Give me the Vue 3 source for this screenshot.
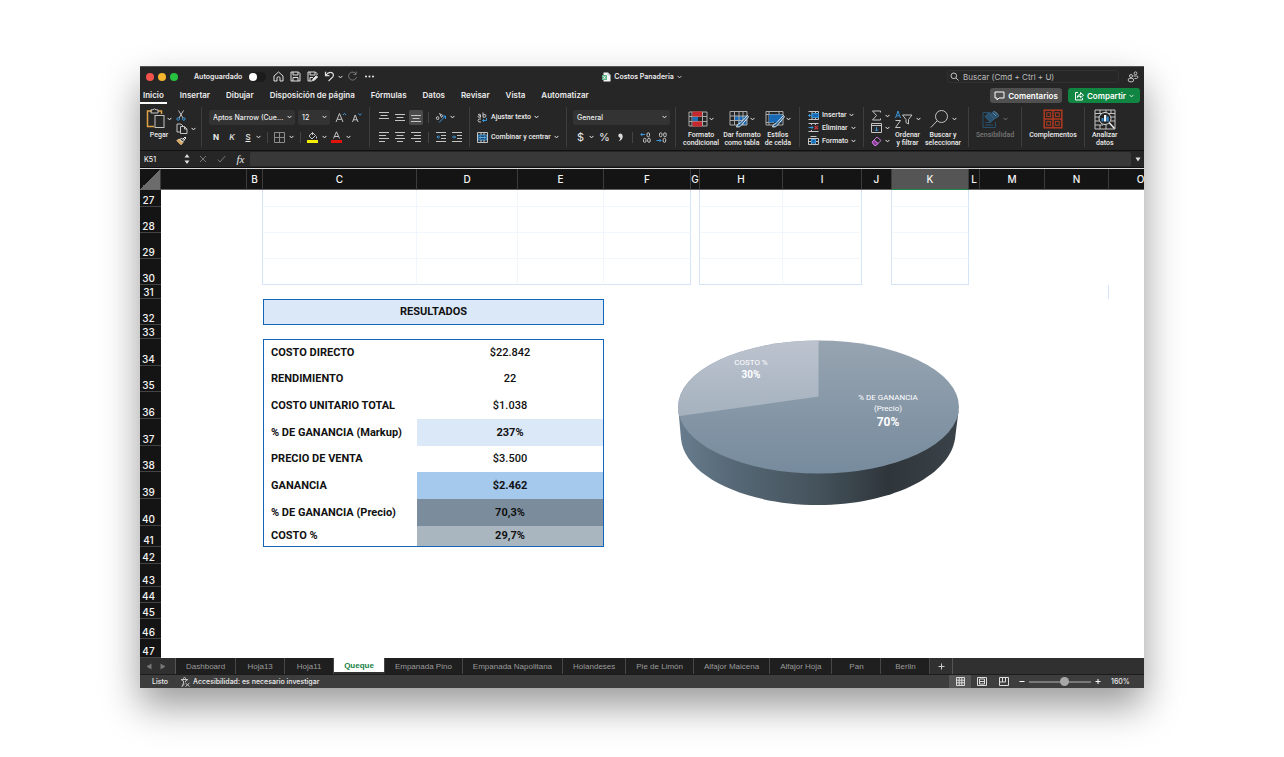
<script setup>
import { ref } from 'vue'

const autosave = ref(false)
const zoom = ref(160)
const formula = ref('')
const activeMenu = ref('Inicio')
const activeSheet = ref('Queque')

const menus = ['Inicio', 'Insertar', 'Dibujar', 'Disposición de página', 'Fórmulas', 'Datos', 'Revisar', 'Vista', 'Automatizar']
const sheets = ['Dashboard', 'Hoja13', 'Hoja11', 'Queque', 'Empanada Pino', 'Empanada Napolitana', 'Holandeses', 'Pie de Limón', 'Alfajor Maicena', 'Alfajor Hoja', 'Pan', 'Berlin']
const columns = ['A', 'B', 'C', 'D', 'E', 'F', 'G', 'H', 'I', 'J', 'K', 'L', 'M', 'N', 'O']

const gridRows = [
  { n: 27, h: 'h17' },
  { n: 28, h: 'h26' },
  { n: 29, h: 'h26' },
  { n: 30, h: 'h26', last: true }
]
const results = [
  { n: 34, h: 'h27', label: 'COSTO DIRECTO', value: '$22.842' },
  { n: 35, h: 'h26', label: 'RENDIMIENTO', value: '22' },
  { n: 36, h: 'h27', label: 'COSTO UNITARIO TOTAL', value: '$1.038' },
  { n: 37, h: 'h27', label: '% DE GANANCIA (Markup)', value: '237%', tone: 'pale' },
  { n: 38, h: 'h26', label: 'PRECIO DE VENTA', value: '$3.500' },
  { n: 39, h: 'h27', label: 'GANANCIA', value: '$2.462', tone: 'sky' },
  { n: 40, h: 'h27', label: '% DE GANANCIA (Precio)', value: '70,3%', tone: 'slate' },
  { n: 41, h: 'h21', label: 'COSTO %', value: '29,7%', tone: 'mist' }
]
const tailRows = [
  { n: 42, h: 'h17' },
  { n: 43, h: 'h23' },
  { n: 44, h: 'h16' },
  { n: 45, h: 'h16' },
  { n: 46, h: 'h20' },
  { n: 47, h: 'h19' }
]
</script>

<template>
  <main class="page">
    <section class="window">
      <header class="titlebar">
        <div class="tb-left">
          <div class="lights">
            <button class="light red" aria-label="Cerrar"></button>
            <button class="light yellow" aria-label="Minimizar"></button>
            <button class="light green" aria-label="Ampliar"></button>
          </div>
          <label class="auto"><span>Autoguardado</span><input v-model="autosave" type="checkbox" class="switch" /></label>
          <div class="quick">
            <button aria-label="Inicio"><svg width="11" height="11" viewBox="0 0 11 11"><path d="M1 5 5.500 1 10 5V10H7V6.800Q7 5.800 5.500 5.800T4 6.800V10H1Z" /></svg></button>
            <button aria-label="Guardar"><svg width="11" height="11" viewBox="0 0 11 11"><path d="M1 1H8.500L10 2.500V10H1ZM3 1V4H8V1M3 10V6.500H8V10" /></svg></button>
            <button aria-label="Guardar como"><svg width="11" height="11" viewBox="0 0 11 11"><path d="M5 10H1V1H8.500L10 2.500V4M3 1V4H8V1M3 10V6.500H6" /><path d="M5.500 9.800 6 8 9.300 4.700 10.600 6 7.300 9.300Z" fill="#eee" /></svg></button>
            <button aria-label="Deshacer"><svg width="11" height="11" viewBox="0 0 11 11"><path d="M1.500 .8V4.600H5.400M1.600 4.500Q4.500 .8 7.500 1.600 10.300 2.900 9 5.600L4.500 10.200" stroke-width="1.200" /></svg></button>
            <button class="mini" aria-label="Opciones de deshacer"><svg class="chev" width="5" height="4" viewBox="0 0 5 4"><path d="M.6 .9 2.500 2.900 4.400 .9" /></svg></button>
            <button class="dim" aria-label="Rehacer"><svg width="11" height="11" viewBox="0 0 11 11"><path d="M9 3A4 4 0 1 0 9.500 6M9.200 .6V3.400H6.400" /></svg></button>
            <button aria-label="Más"><svg width="11" height="11" viewBox="0 0 11 11"><g fill="#eee" stroke="none"><circle cx="2" cy="5.500" r="1" /><circle cx="5.500" cy="5.500" r="1" /><circle cx="9" cy="5.500" r="1" /></g></svg></button>
          </div>
        </div>
        <div class="doc">
          <svg width="9" height="10" viewBox="0 0 9 10"><path d="M1.500 .5H6L8.500 3V9.500H1.500Z" fill="#f4f6f4" stroke="none" /><path d="M6 .5V3H8.500" stroke="#9ab" stroke-width=".6" /><rect x="0" y="3" width="5" height="5" fill="#5fb287" stroke="none" /><path d="M1.500 4.200 3.500 6.800M3.500 4.200 1.500 6.800" stroke="#fff" stroke-width=".8" /></svg>
          <h1>Costos Panaderia</h1>
          <svg class="chev" width="5" height="4" viewBox="0 0 5 4"><path d="M.6 .9 2.500 2.900 4.400 .9" stroke-width=".8" /></svg>
        </div>
        <div class="tb-right">
          <label class="search">
            <svg width="9" height="9" viewBox="0 0 9 9"><circle cx="3.800" cy="3.800" r="2.800" /><path d="M6 6 8.500 8.500" /></svg>
            <input type="text" placeholder="Buscar (Cmd + Ctrl + U)" aria-label="Buscar" />
          </label>
          <button aria-label="Colaboradores"><svg width="12" height="12" viewBox="0 0 12 12"><circle cx="4" cy="5" r="1.500" /><rect x="1.200" y="7.300" width="5.400" height="3.500" rx="1.700" /><circle cx="8.500" cy="2.300" r="1.400" /><path d="M6.500 5H9.500Q11 5 11 6T9.500 7.500H7.500" /></svg></button>
        </div>
      </header>

      <nav class="menubar">
        <button v-for="m in menus" :key="m" :class="{ on: m === activeMenu }" @click="activeMenu = m">{{ m }}</button>
        <div class="share">
          <button class="pill"><svg width="11" height="10" viewBox="0 0 11 10"><path d="M1 1H10V7H5L3 9V7H1Z" /></svg>Comentarios</button>
          <button class="pill go"><svg width="10" height="10" viewBox="0 0 10 10"><path d="M4 1.500H1.500V9H8.500V7M3 6.500Q3.500 3.500 6.500 3.500V1.500L9.500 4.300 6.500 6.700V5Q4.500 5 3 6.500Z" /></svg>Compartir<svg class="chev" width="5" height="4" viewBox="0 0 5 4"><path d="M.6 .9 2.500 2.900 4.400 .9" stroke-width=".8" /></svg></button>
        </div>
      </nav>

      <div class="ribbon">
        <div class="group paste">
          <button class="big">
            <span class="icon"><svg width="20" height="22" viewBox="0 0 20 22"><path d="M6 3H1.500V18.500H8M12 3H15.500V6" stroke="#e0a244" stroke-width="1.500" /><path d="M5 1.800H7Q8.500 -.2 10 1.800H12V5H5Z" /><rect x="9" y="7.500" width="9" height="12" /></svg><svg class="chev" width="5" height="4" viewBox="0 0 5 4"><path d="M.6 .9 2.500 2.900 4.400 .9" /></svg></span>
            <span>Pegar</span>
          </button>
          <div class="stack">
            <button aria-label="Cortar"><svg width="10" height="11" viewBox="0 0 10 11"><path d="M2.500 .5 7 8M7.500 .5 3 8" /><circle cx="2.200" cy="9" r="1.300" stroke="#3c96d8" /><circle cx="7.800" cy="9" r="1.300" stroke="#3c96d8" /></svg></button>
            <button aria-label="Copiar"><svg width="12" height="11" viewBox="0 0 12 11"><path d="M4.500 9H1V1H5L7 3M4.500 3.500H8.500L11 6V10.500H4.500ZM8.500 3.500V6H11" /></svg><svg class="chev" width="5" height="4" viewBox="0 0 5 4"><path d="M.6 .9 2.500 2.900 4.400 .9" /></svg></button>
            <button aria-label="Copiar formato"><svg width="11" height="10" viewBox="0 0 11 10"><path d="M.8 4.500 5 8.800 7 6.500 3.500 3Z" fill="#d9a860" stroke="#e8c088" /><path d="M4 3.500 5.500 2 8 4.500 6.500 6ZM6.800 3.200 9 1 10 2 7.800 4.200" stroke="#eee" /></svg></button>
          </div>
        </div>

        <div class="group rows font">
          <div class="row">
            <span class="pick w86"><select aria-label="Fuente"><option>Aptos Narrow (Cue...</option></select><svg class="chev" width="5" height="4" viewBox="0 0 5 4"><path d="M.6 .9 2.500 2.900 4.400 .9" /></svg></span>
            <span class="pick w32"><select aria-label="Tamaño"><option>12</option></select><svg class="chev" width="5" height="4" viewBox="0 0 5 4"><path d="M.6 .9 2.500 2.900 4.400 .9" /></svg></span>
            <button class="grow" aria-label="Aumentar fuente"><svg width="12" height="11" viewBox="0 0 12 11"><path d="M1 10 4.500 1.500 8 10M2.300 7.300H6.700" /><path d="M8 3 9.500 1.300 11 3" stroke="#3c96d8" /></svg></button>
            <button class="grow" aria-label="Disminuir fuente"><svg width="11" height="11" viewBox="0 0 11 11"><path d="M1.500 10 4.200 3 7 10M2.500 7.800H6" /><path d="M7.500 1.500 9 3.200 10.500 1.500" stroke="#3c96d8" /></svg></button>
          </div>
          <div class="row marks">
            <button class="b">N</button><button class="i">K</button><button class="u">S</button>
            <svg class="chev" width="5" height="4" viewBox="0 0 5 4"><path d="M.6 .9 2.500 2.900 4.400 .9" /></svg>
            <i class="bar"></i>
            <button aria-label="Bordes"><svg width="11" height="11" viewBox="0 0 11 11"><path d="M.5 .5H10.500V10.500H.5ZM5.500 .5V10.500M.5 5.500H10.500" stroke="#8c8c8c" /></svg></button>
            <svg class="chev" width="5" height="4" viewBox="0 0 5 4"><path d="M.6 .9 2.500 2.900 4.400 .9" /></svg>
            <i class="bar"></i>
            <button aria-label="Color de relleno"><svg width="11" height="12" viewBox="0 0 11 12"><path d="M2 5 5.500 1.500 8.500 4.500 5 8ZM5.500 1.500V4M9.500 5.500V7.500" /><rect y="9" width="11" height="3" fill="#f6ee00" stroke="none" /></svg></button>
            <svg class="chev" width="5" height="4" viewBox="0 0 5 4"><path d="M.6 .9 2.500 2.900 4.400 .9" /></svg>
            <button aria-label="Color de fuente"><svg width="11" height="12" viewBox="0 0 11 12"><path d="M2.500 7.500 5.500 .8 8.500 7.500M3.500 5.500H7.500" /><rect y="9" width="11" height="3" fill="#e3120b" stroke="none" /></svg></button>
            <svg class="chev" width="5" height="4" viewBox="0 0 5 4"><path d="M.6 .9 2.500 2.900 4.400 .9" /></svg>
          </div>
        </div>

        <div class="group rows align">
          <div class="row">
            <button aria-label="Alinear arriba"><svg width="10" height="10" viewBox="0 0 10 10"><path d="M0 .5H10M1.500 3.500H8.500M0 6.500H10" /></svg></button>
            <button aria-label="Alinear al medio"><svg width="10" height="10" viewBox="0 0 10 10"><path d="M0 2.500H10M1.500 5.500H8.500M0 8.500H10" /></svg></button>
            <button class="active" aria-label="Alinear abajo"><svg width="10" height="10" viewBox="0 0 10 10"><path d="M0 3.500H10M1.500 6.500H8.500M0 9.500H10" /></svg></button>
            <i class="bar"></i>
            <button aria-label="Orientación"><svg width="12" height="11" viewBox="0 0 12 11"><path d="M1 6Q2.500 3 4 5.500 4 8 2.200 7.500T2 5.500M4.500 1 6.500 5.500Q8.500 3.500 6.800 2.500T5.500 4" /><path d="M4 10.500 10.500 4M7.500 4H10.500V7" stroke="#3c96d8" /></svg></button>
            <svg class="chev" width="5" height="4" viewBox="0 0 5 4"><path d="M.6 .9 2.500 2.900 4.400 .9" /></svg>
          </div>
          <div class="row">
            <button aria-label="Izquierda"><svg width="10" height="10" viewBox="0 0 10 10"><path d="M0 .5H10M0 3.500H7M0 6.500H10M0 9.500H6" /></svg></button>
            <button aria-label="Centrar"><svg width="10" height="10" viewBox="0 0 10 10"><path d="M0 .5H10M1.500 3.500H8.500M0 6.500H10M2 9.500H8" /></svg></button>
            <button aria-label="Derecha"><svg width="10" height="10" viewBox="0 0 10 10"><path d="M0 .5H10M3 3.500H10M0 6.500H10M4 9.500H10" /></svg></button>
            <i class="bar"></i>
            <button aria-label="Disminuir sangría"><svg width="10" height="10" viewBox="0 0 10 10"><path d="M0 .5H10M5 3.500H10M5 6.500H10M0 9.500H10" /><path d="M4 5H1M2.500 3.500 1 5 2.500 6.500" stroke="#3c96d8" /></svg></button>
            <button aria-label="Aumentar sangría"><svg width="10" height="10" viewBox="0 0 10 10"><path d="M0 .5H10M5 3.500H10M5 6.500H10M0 9.500H10" /><path d="M0 5H3.500M2 3.500 3.500 5 2 6.500" stroke="#3c96d8" /></svg></button>
          </div>
        </div>

        <div class="group rows wrap">
          <div class="row"><button class="txt"><svg width="11" height="11" viewBox="0 0 11 11"><path d="M1 2.500Q3.500 1.500 3.500 3V5.500M3.500 3.500Q1 3.500 1 4.700T3.500 5M6 .5V5.300M6 3Q9 1.500 9 3.800T6 5M4 7Q1 6.500 1 8.500T4 10" /><path d="M9.500 6V8.500H5.500M7 7 5.500 8.500 7 10" stroke="#3c96d8" /></svg>Ajustar texto<svg class="chev" width="5" height="4" viewBox="0 0 5 4"><path d="M.6 .9 2.500 2.900 4.400 .9" /></svg></button></div>
          <div class="row"><button class="txt"><svg width="11" height="11" viewBox="0 0 11 11"><rect x="1" y="3" width="9" height="5" fill="#1d4f78" stroke="#3c96d8" /><path d="M.5 .5H10.500V10.500H.5ZM4 .5V3M7 .5V3M4 8V10.500M7 8V10.500" /><path d="M2.500 5.500H8.500M3.500 4.500 2.500 5.500 3.500 6.500M7.500 4.500 8.500 5.500 7.500 6.500" stroke="#7ac0f5" stroke-width=".8" /></svg>Combinar y centrar<svg class="chev" width="5" height="4" viewBox="0 0 5 4"><path d="M.6 .9 2.500 2.900 4.400 .9" /></svg></button></div>
        </div>

        <div class="group rows number">
          <div class="row"><span class="pick fill"><select aria-label="Formato de número"><option>General</option></select><svg class="chev" width="5" height="4" viewBox="0 0 5 4"><path d="M.6 .9 2.500 2.900 4.400 .9" /></svg></span></div>
          <div class="row symbols">
            <button class="sym">$</button>
            <svg class="chev" width="5" height="4" viewBox="0 0 5 4"><path d="M.6 .9 2.500 2.900 4.400 .9" /></svg>
            <button class="sym">%</button>
            <button aria-label="Estilo millares"><svg width="10" height="11" viewBox="0 0 10 11"><path d="M5.500 1.500A2.100 2.100 0 1 0 5.300 5.700Q5.600 7.500 3.600 9.300 8 8 7.700 4 7.500 1.600 5.500 1.500Z" fill="#ddd" stroke="none" /></svg></button>
            <i class="bar"></i>
            <button aria-label="Aumentar decimales"><svg width="11" height="11" viewBox="0 0 11 11"><path d="M5 2.500H.8M2.300 1 .8 2.500 2.300 4" stroke="#3c96d8" /><rect x="7" y=".8" width="2.500" height="4" rx="1.200" /><rect x="3.500" y="6.300" width="2.500" height="4" rx="1.200" /><rect x="7.700" y="6.300" width="2.500" height="4" rx="1.200" /></svg></button>
            <button aria-label="Disminuir decimales"><svg width="11" height="11" viewBox="0 0 11 11"><path d="M.5 8.500H5M3.500 7 5 8.500 3.500 10" stroke="#3c96d8" /><rect x="3.500" y=".8" width="2.500" height="4" rx="1.200" /><rect x="7.700" y=".8" width="2.500" height="4" rx="1.200" /><rect x="7.200" y="6.300" width="2.500" height="4" rx="1.200" /></svg></button>
          </div>
        </div>

        <div class="group trio">
          <button class="big">
            <span class="icon"><svg width="20" height="18" viewBox="0 0 20 18"><path d="M1 2H19V16H1ZM1 6.500H19M1 11.500H19M4 2V16M14.500 2V16" stroke="#aaa" /><path d="M4.500 1.500H14V6.500H4.500ZM4.500 11.500H14V16.500H4.500Z" fill="#c5282f" stroke="none" /><path d="M4.500 7H10V11H4.500Z" fill="#1e6fb8" stroke="none" /></svg><svg class="chev" width="5" height="4" viewBox="0 0 5 4"><path d="M.6 .9 2.500 2.900 4.400 .9" /></svg></span>
            <span>Formato<br />condicional</span>
          </button>
          <button class="big">
            <span class="icon"><svg width="20" height="18" viewBox="0 0 20 18"><path d="M5 6H18V15H9V11H5Z" fill="#1769b5" stroke="none" /><path d="M1 1.500H18V15H1ZM1 6H18M1 10.500H18M5.500 1.500V15M10 1.500V15M14 1.500V15" stroke="#aaa" /><path d="M18.500 5.500 11 13.500Q8 13.500 7.500 17 11.500 17.500 12.500 15L19.500 6.800Z" fill="#2a5f8e" stroke="#d8e4ee" /></svg><svg class="chev" width="5" height="4" viewBox="0 0 5 4"><path d="M.6 .9 2.500 2.900 4.400 .9" /></svg></span>
            <span>Dar formato<br />como tabla</span>
          </button>
          <button class="big">
            <span class="icon"><svg width="20" height="18" viewBox="0 0 20 18"><path d="M1 1.500H18V15H1ZM1 4.500H18M4 1.500V15M1 12.500H9M14 1.500V4" stroke="#aaa" /><rect x="4" y="4.500" width="13" height="8" fill="#1769b5" stroke="none" /><path d="M18.500 5.500 11 13.500Q8 13.500 7.500 17 11.500 17.500 12.500 15L19.500 6.800Z" fill="#2a5f8e" stroke="#d8e4ee" /></svg><svg class="chev" width="5" height="4" viewBox="0 0 5 4"><path d="M.6 .9 2.500 2.900 4.400 .9" /></svg></span>
            <span>Estilos<br />de celda</span>
          </button>
        </div>

        <div class="group cells">
          <button class="txt"><svg width="11" height="9" viewBox="0 0 11 9"><path d="M.5 .5H10.500V8.500H.5M4 .5V8.500M7.500 .5V8.500" /><path d="M4 2.500H10.500V6.500H4Z" fill="#1769b5" stroke="#3c96d8" /><path d="M3.500 4.500H.5M2 3 .5 4.500 2 6" stroke="#3c96d8" /></svg>Insertar<svg class="chev" width="5" height="4" viewBox="0 0 5 4"><path d="M.6 .9 2.500 2.900 4.400 .9" /></svg></button>
          <button class="txt"><svg width="11" height="9" viewBox="0 0 11 9"><path d="M.5 .5H10.500M.5 8.500H10.500M3.500 .5V2M7.500 .5V2M3.500 7V8.500" /><path d="M.5 4.500H5M3.500 3 5 4.500 3.500 6" stroke="#3c96d8" /><path d="M6.500 2.800 10 6.300M10 2.800 6.500 6.300" stroke="#d8383f" stroke-width="1.200" /></svg>Eliminar<svg class="chev" width="5" height="4" viewBox="0 0 5 4"><path d="M.6 .9 2.500 2.900 4.400 .9" /></svg></button>
          <button class="txt"><svg width="11" height="9" viewBox="0 0 11 9"><path d="M2.500 .5H8.500M.5 2.500H10.500V8.500H.5ZM.5 5.500H10.500M3.500 2.500V8.500M7.500 2.500V8.500" /><rect x="3.500" y="3.500" width="4" height="3.500" fill="#1769b5" stroke="#3c96d8" /></svg>Formato<svg class="chev" width="5" height="4" viewBox="0 0 5 4"><path d="M.6 .9 2.500 2.900 4.400 .9" /></svg></button>
        </div>

        <div class="group edit">
          <div class="stack">
            <button aria-label="Autosuma"><svg width="11" height="11" viewBox="0 0 11 11"><path d="M9.500 2.500V1H1.500L5.500 5.500 1.500 10H9.500V8.500" /></svg><svg class="chev" width="5" height="4" viewBox="0 0 5 4"><path d="M.6 .9 2.500 2.900 4.400 .9" /></svg></button>
            <button aria-label="Rellenar"><svg width="11" height="10" viewBox="0 0 11 10"><path d="M.5 .5H10.500V9.500H.5ZM.5 2.500H10.500" /><path d="M5.500 4V8M4 6.500 5.500 8 7 6.500" stroke="#3c96d8" /></svg><svg class="chev" width="5" height="4" viewBox="0 0 5 4"><path d="M.6 .9 2.500 2.900 4.400 .9" /></svg></button>
            <button aria-label="Borrar"><svg width="11" height="10" viewBox="0 0 11 10"><path d="M1 6 6 1 10 4.500 5 9.500H3.500ZM3 4 7 7.500" stroke="#c878d6" /><path d="M1 6 3 4 7 7.500 5 9.500H3.500Z" fill="#8d3c9c" stroke="#c878d6" /></svg><svg class="chev" width="5" height="4" viewBox="0 0 5 4"><path d="M.6 .9 2.500 2.900 4.400 .9" /></svg></button>
          </div>
          <button class="big">
            <span class="icon"><svg width="19" height="20" viewBox="0 0 19 20"><path d="M1.500 9 4 2 6.500 9M2.300 6.800H5.700" stroke="#3c96d8" /><path d="M1.500 11.500H6.500L1.500 18.500H6.500M8.500 6H18L14.500 10.500V15L12 13.500V10.500Z" /></svg><svg class="chev" width="5" height="4" viewBox="0 0 5 4"><path d="M.6 .9 2.500 2.900 4.400 .9" /></svg></span>
            <span>Ordenar<br />y filtrar</span>
          </button>
          <button class="big">
            <span class="icon"><svg width="19" height="20" viewBox="0 0 19 20"><circle cx="11.500" cy="7.500" r="6" /><path d="M7.200 11.800 .8 18.500" /></svg><svg class="chev" width="5" height="4" viewBox="0 0 5 4"><path d="M.6 .9 2.500 2.900 4.400 .9" /></svg></span>
            <span>Buscar y<br />seleccionar</span>
          </button>
        </div>

        <div class="group solo">
          <button class="big off" disabled>
            <span class="icon"><svg width="18" height="19" viewBox="0 0 18 19"><path d="M9 2.500H1V17.500H13.500V12M3.500 12.500H9M3.500 15H11" stroke="#27506f" /><path d="M3 6.500 7 3 12 9 8.500 12ZM8 5 12 1 17 6 12 9" fill="#27506f" stroke="#38627f" /><path d="M11 3 14 6M13 1.500 16 4.500" stroke="#7690a3" /></svg><svg class="chev" width="5" height="4" viewBox="0 0 5 4"><path d="M.6 .9 2.500 2.900 4.400 .9" /></svg></span>
            <span>Sensibilidad</span>
          </button>
        </div>
        <div class="group solo">
          <button class="big">
            <span class="icon"><svg width="20" height="20" viewBox="0 0 20 20"><g stroke="#b03a20" stroke-width="1.500"><rect x="1.200" y="1.200" width="17.600" height="17.600" /><path d="M10 1V19M1 10H19" /><rect x="3.800" y="3.800" width="3.800" height="3.800" stroke-width="1" /><rect x="12.400" y="3.800" width="3.800" height="3.800" stroke-width="1" /><rect x="3.800" y="12.400" width="3.800" height="3.800" stroke-width="1" /><rect x="12.400" y="12.400" width="3.800" height="3.800" stroke-width="1" /></g></svg></span>
            <span>Complementos</span>
          </button>
        </div>
        <div class="group solo end">
          <button class="big">
            <span class="icon"><svg width="22" height="21" viewBox="0 0 22 21"><path d="M1 1H21V20H1ZM1 4.500H21M1 8H5M1 12H5M1 16H9M17 8H21M17 12H21M6 1V4.500M12 1V4.500M17 1V4.500M6 16V20M12 16V20" /><circle cx="11" cy="9.500" r="6" fill="#222" stroke="#ddd" /><path d="M15.200 13.800 20.500 19.500" stroke="#eee" stroke-width="1.500" /><rect x="7.500" y="9" width="2" height="3.500" fill="#2f8fdc" stroke="none" /><rect x="10" y="6" width="2.300" height="6.500" fill="#f2f6fa" stroke="none" /><rect x="12.700" y="7.500" width="2" height="5" fill="#2f8fdc" stroke="none" /></svg></span>
            <span>Analizar<br />datos</span>
          </button>
        </div>
      </div>

      <div class="formulabar">
        <input class="namebox" type="text" value="K51" aria-label="Cuadro de nombres" />
        <svg class="step" width="6" height="12" viewBox="0 0 6 12"><path d="M3 1 5.500 4.500H.5ZM3 11 5.500 7.500H.5Z" fill="#ddd" stroke="none" /></svg>
        <button aria-label="Cancelar"><svg width="8" height="8" viewBox="0 0 8 8"><path d="M1 1 7 7M7 1 1 7" stroke="#777" /></svg></button>
        <button aria-label="Aceptar"><svg width="9" height="8" viewBox="0 0 9 8"><path d="M.8 4.500 3 7 8.200 1" stroke="#777" /></svg></button>
        <button class="fx">fx</button>
        <input v-model="formula" class="formula" type="text" aria-label="Barra de fórmulas" />
        <button class="expand" aria-label="Expandir"><svg width="6" height="5" viewBox="0 0 6 5"><path d="M.5 .5H5.500L3 4.500Z" fill="#ddd" stroke="none" /></svg></button>
      </div>

      <div class="sheet">
        <table>
          <colgroup>
            <col class="c-head" /><col v-for="c in columns" :key="c" :class="'c-' + c" />
          </colgroup>
          <thead>
            <tr>
              <th class="corner"></th>
              <th v-for="c in columns" :key="c" scope="col" :class="{ sel: c === 'K' }">{{ c === 'A' ? '' : c }}</th>
            </tr>
          </thead>
          <tbody>
            <tr v-for="r in gridRows" :key="r.n" :class="[r.h, { last: r.last }]">
              <th scope="row">{{ r.n }}</th>
              <td></td><td class="pre"></td>
              <td class="g"></td><td class="g"></td><td class="g"></td><td class="g edge"></td>
              <td class="pre"></td>
              <td class="g"></td><td class="g edge"></td>
              <td class="pre"></td>
              <td class="g edge"></td>
              <td></td><td></td><td></td><td></td>
            </tr>
            <tr class="h14"><th scope="row">31</th><td colspan="13"></td><td class="stub"></td><td></td></tr>
            <tr class="h26"><th scope="row">32</th><td colspan="2"></td><td colspan="3" class="heading">RESULTADOS</td><td colspan="10"></td></tr>
            <tr class="h14"><th scope="row">33</th><td colspan="15"></td></tr>
            <tr v-for="r in results" :key="r.n" class="res" :class="r.h">
              <th scope="row">{{ r.n }}</th>
              <td colspan="2"></td>
              <td class="name">{{ r.label }}</td>
              <td colspan="2" class="value" :class="r.tone">{{ r.value }}</td>
              <td colspan="10"></td>
            </tr>
            <tr v-for="r in tailRows" :key="r.n" :class="r.h"><th scope="row">{{ r.n }}</th><td colspan="15"></td></tr>
          </tbody>
        </table>

        <svg class="chart" width="284" height="168" viewBox="0 0 284 168" role="img" aria-label="Costo 30%, ganancia 70%">
          <defs>
            <linearGradient id="side" x1="0" x2="1" y1="0" y2="0">
              <stop offset="0" stop-color="#677c8e" /><stop offset=".2" stop-color="#566876" /><stop offset=".5" stop-color="#44525b" /><stop offset=".75" stop-color="#2f363b" /><stop offset="1" stop-color="#3a4349" />
            </linearGradient>
            <linearGradient id="top" x1="0" x2="0" y1="0" y2="1">
              <stop offset="0" stop-color="#97a4b1" /><stop offset="1" stop-color="#768b9d" />
            </linearGradient>
            <linearGradient id="light" x1="0" x2="0" y1="0" y2="1">
              <stop offset="0" stop-color="#bcc3cf" /><stop offset="1" stop-color="#a5b2be" />
            </linearGradient>
          </defs>
          <path d="M1.500 72 4 100C8 138 70 166 141 166S272 138 278 100L281.500 72Z" fill="url(#side)" />
          <ellipse cx="141.500" cy="68" rx="140.500" ry="66.500" fill="url(#top)" />
          <path d="M141.500 57.500V1.500A140.500 66.500 0 0 0 2.500 77Z" fill="url(#light)" />
          <text class="lbl" x="74" y="26">COSTO %</text>
          <text class="pct" x="74" y="39">30%</text>
          <text class="lbl" x="211" y="61">% DE GANANCIA</text>
          <text class="lbl" x="211" y="72">(Precio)</text>
          <text class="pct big-pct" x="211" y="87">70%</text>
        </svg>
      </div>

      <nav class="tabs">
        <div class="arrows">
          <button aria-label="Anterior"><svg width="6" height="7" viewBox="0 0 6 7"><path d="M5.500 .5V6.500L.5 3.500Z" fill="#777" stroke="none" /></svg></button>
          <button aria-label="Siguiente"><svg width="6" height="7" viewBox="0 0 6 7"><path d="M.5 .5V6.500L5.500 3.500Z" fill="#777" stroke="none" /></svg></button>
        </div>
        <button v-for="s in sheets" :key="s" class="tab" :class="{ on: s === activeSheet }" @click="activeSheet = s">{{ s }}</button>
        <button class="plus" aria-label="Hoja nueva"><svg width="7" height="7" viewBox="0 0 7 7"><path d="M3.500 .5V6.500M.5 3.500H6.500" stroke="#ccc" /></svg></button>
      </nav>

      <footer class="status">
        <span>Listo</span>
        <button class="acc"><svg width="10" height="10" viewBox="0 0 10 10"><circle cx="4.500" cy="1.500" r="1" /><path d="M1 2.500 3.500 4V6L2 9.500 4.500 6.800M8 2.500 5.500 4V5M1 2.500H8M5.500 6 9.500 9.500M9.500 6 5.500 9.500" /></svg>Accesibilidad: es necesario investigar</button>
        <div class="views">
          <button class="on" aria-label="Normal"><svg width="9" height="9" viewBox="0 0 9 9"><path d="M.5 .5H8.500V8.500H.5ZM3.200 .5V8.500M5.800 .5V8.500M.5 3.200H8.500M.5 5.800H8.500" stroke="#ddd" /></svg></button>
          <button aria-label="Diseño de página"><svg width="10" height="9" viewBox="0 0 10 9"><path d="M.5 .5H9.500V8.500H.5ZM2.500 2H7.500V7H2.500ZM2.500 4.500H7.500" stroke="#ddd" /></svg></button>
          <button aria-label="Saltos de página"><svg width="10" height="9" viewBox="0 0 10 9"><path d="M.5 .5H9.500V8.500H.5ZM3.500 .5V5H6.500V.5M.5 5H3.500" stroke="#ddd" /></svg></button>
        </div>
        <button class="zoombtn" aria-label="Alejar"><svg width="6" height="7" viewBox="0 0 6 7"><path d="M.5 3.500H5.500" stroke="#fff" /></svg></button>
        <input v-model="zoom" class="zoom" type="range" min="10" max="270" aria-label="Zoom" />
        <button class="zoombtn" aria-label="Acercar"><svg width="6" height="7" viewBox="0 0 6 7"><path d="M.5 3.500H5.500M3 1V6" stroke="#fff" /></svg></button>
        <output>{{ zoom }}%</output>
      </footer>
    </section>
  </main>
</template>

<style>
body {
  background: #fff;
}
</style>

<style scoped>
* {
  box-sizing: border-box;
}
.page {
  padding: 66px 140px 70px;
  font-family: Inter, "Liberation Sans", sans-serif;
}
.window {
  background: #262626;
  color: #ececec;
  font-size: 7px;
  font-weight: 500;
  box-shadow: 0 18px 36px rgba(0, 0, 0, 0.4);
  overflow: hidden;
}
button,
input,
select {
  margin: 0;
  padding: 0;
  border: 0;
  background: none;
  color: inherit;
  font: inherit;
  outline: none;
}
button {
  display: inline-flex;
  align-items: center;
  justify-content: center;
  white-space: nowrap;
  flex: none;
}
svg {
  flex: none;
  display: block;
  fill: none;
  stroke: #c4c4c4;
  stroke-width: 1;
}
.chev {
  stroke: #e8e8e8;
  stroke-width: 1;
}

.titlebar {
  display: grid;
  grid-template-columns: 1fr auto 1fr;
  align-items: center;
  height: 20px;
  border-top: 1px solid #555;
}
.tb-left,
.lights,
.auto,
.quick,
.doc,
.tb-right {
  display: flex;
  align-items: center;
}
.lights {
  gap: 4px;
  padding-left: 6px;
  width: 54px;
}
.light {
  width: 8px;
  height: 8px;
  border-radius: 50%;
}
.red { background: #f4524d; }
.yellow { background: #f6b52e; }
.green { background: #27c33f; }
.auto {
  gap: 7px;
  font-weight: 600;
}
.switch {
  appearance: none;
  width: 17px;
  height: 10px;
  border-radius: 5px;
  background: #1b1b1b;
  display: flex;
  align-items: center;
}
.switch::before {
  content: "";
  width: 8px;
  height: 8px;
  border-radius: 50%;
  background: #fff;
}
.quick {
  padding-left: 7px;
  gap: 6px;
}
.quick svg {
  stroke: #e0e0e0;
}
.quick .mini {
  margin: 0 -2px 0 -3px;
}
.quick .dim svg {
  stroke: #777;
}
.doc {
  gap: 3px;
}
.doc h1 {
  margin: 0;
  font-size: 7px;
  font-weight: 600;
}
.tb-right {
  justify-content: flex-end;
  gap: 8px;
  padding-right: 5px;
}
.search {
  display: flex;
  align-items: center;
  gap: 4px;
  width: 172px;
  height: 13px;
  padding: 0 2px;
  border: 1px solid #313131;
  border-radius: 3px;
}
.search input {
  flex: 1;
  min-width: 0;
  font-size: 8px;
  font-weight: 400;
}
.search input::placeholder {
  color: #bcbcbc;
  opacity: 1;
}

.menubar {
  display: flex;
  align-items: stretch;
  height: 18px;
  padding-right: 4px;
  gap: 10px;
}
.menubar > button {
  padding: 2px 3px 0;
  font-size: 8px;
  font-weight: 600;
  border-bottom: 2px solid transparent;
}
.menubar > .on {
  border-color: #fff;
}
.share {
  margin-left: auto;
  display: flex;
  align-items: flex-end;
  gap: 6px;
  padding-bottom: 1px;
}
.pill {
  width: 72px;
  height: 15px;
  gap: 3px;
  border-radius: 3px;
  background: #505050;
  font-size: 8px;
  font-weight: 600;
  color: #fff;
}
.pill svg {
  stroke: #fff;
}
.go {
  background: #118642;
}

.ribbon {
  display: grid;
  grid-template-columns: 62px 168px 100px 97px 109px 124px 64px 105px 53px 63px minmax(59px, 1fr);
  padding: 3px 0;
  border-bottom: 1px solid #111;
}
.group {
  display: flex;
  height: 40px;
  border-right: 1px solid #3d3d3d;
  min-width: 0;
}
.end {
  border-right: 0;
}
.rows {
  flex-direction: column;
}
.row {
  display: flex;
  align-items: center;
  height: 20px;
}
.bar {
  width: 1px;
  height: 11px;
  background: #444;
}
.big,
.txt {
  font-family: Roboto, sans-serif;
}
.big {
  flex-direction: column;
  justify-content: flex-start;
  line-height: 8px;
  text-align: center;
}
.icon {
  display: flex;
  align-items: center;
  gap: 3px;
  height: 24px;
}
.paste {
  padding-left: 6px;
  gap: 4px;
}
.paste .icon {
  gap: 1px;
}
.stack {
  display: flex;
  flex-direction: column;
  justify-content: space-around;
  align-items: flex-start;
  padding-top: 2px;
}
.stack button {
  gap: 3px;
}
.font {
  padding-left: 7px;
}
.pick {
  position: relative;
  height: 15px;
  background: #333;
  border-radius: 2px;
  display: flex;
  align-items: center;
  margin-right: 3px;
}
.pick select {
  appearance: none;
  width: 100%;
  height: 100%;
  padding-left: 4px;
}
.pick .chev {
  position: absolute;
  right: 3px;
  pointer-events: none;
}
.w86 { width: 86px; }
.w32 { width: 32px; }
.fill { flex: 1; margin: 0; }
.grow {
  margin: 0 2px;
}
.marks {
  gap: 4px;
  padding-left: 3px;
}
.marks button {
  min-width: 8px;
  font-size: 8px;
}
.marks .bar {
  margin: 0 2px;
}
.marks .b { font-weight: 700; margin-right: 4px; }
.marks .i { font-style: italic; margin-right: 4px; }
.marks .u { text-decoration: underline; }
.align {
  padding-left: 7px;
}
.align .row {
  gap: 2px;
}
.align button {
  width: 14px;
  height: 15px;
}
.align .active {
  background: #4a4a4a;
  border-radius: 2px;
}
.align .bar {
  margin: 0 3px;
}
.wrap {
  padding-left: 7px;
}
.txt {
  gap: 3px;
}
.number {
  padding: 0 5px 0 6px;
}
.symbols {
  gap: 5px;
  padding-left: 4px;
}
.sym {
  font-size: 11px;
  font-weight: 400;
}
.symbols .bar {
  margin: 0 2px;
}
.trio {
  padding-left: 7px;
  gap: 4px;
}
.trio .icon {
  gap: 1px;
}
.cells {
  flex-direction: column;
  justify-content: space-around;
  align-items: flex-start;
  padding: 2px 0 0 8px;
}
.edit {
  padding-left: 7px;
  gap: 4px;
}
.solo {
  justify-content: center;
}
.solo.end {
  justify-content: flex-start;
  padding-left: 7px;
}
.off {
  color: #777;
}
.off .chev {
  stroke: #777;
}

.formulabar {
  display: flex;
  align-items: center;
  height: 17px;
  background: #262626;
  border-bottom: 1px solid #111;
}
.namebox {
  width: 44px;
  padding-left: 4px;
}
.formulabar button {
  width: 19px;
}
.step {
  margin-right: 3px;
}
.fx {
  font-family: "Liberation Serif", serif;
  font-style: italic;
  font-size: 11px;
}
.formula {
  flex: 1;
  min-width: 0;
  height: 14px;
  padding: 0 4px;
  background: #383838;
  border-radius: 2px;
}
.formulabar .expand {
  width: 13px;
}

.sheet {
  position: relative;
  overflow: hidden;
  background: #fff;
  border-top: 1px solid #d8d8d8;
}
table {
  table-layout: fixed;
  width: 100%;
  min-width: 1033px;
  border-collapse: separate;
  border-spacing: 0;
  color: #111;
  font-family: Roboto, sans-serif;
}
.c-head { width: 21px; }
.c-A { width: 86px; }
.c-B { width: 16px; }
.c-C { width: 154px; }
.c-D { width: 101px; }
.c-E { width: 86px; }
.c-F { width: 87px; }
.c-G { width: 9px; }
.c-H { width: 83px; }
.c-I { width: 79px; }
.c-J { width: 30px; }
.c-K { width: 77px; }
.c-L { width: 11px; }
.c-M { width: 65px; }
.c-N { width: 64px; }
th,
td {
  padding: 0;
  overflow: hidden;
  white-space: nowrap;
}
th {
  background: #141414;
  color: #f4f4f4;
  font-family: Inter, sans-serif;
  font-size: 10px;
  font-weight: 500;
  line-height: 12px;
}
thead th {
  height: 21px;
  border-right: 1px solid #3c3c3c;
  border-bottom: 1px solid #666;
}
thead .corner {
  background: linear-gradient(135deg, #141414 50%, #6c6c6c 50%);
}
thead .sel {
  background: #555;
  border-bottom: 1px solid #1f8a4c;
}
tbody th {
  vertical-align: bottom;
  border-bottom: 1px solid #444;
  padding-right: 4px;
}
.h14 { height: 14px; }
.h16 { height: 16px; }
.h17 { height: 17px; }
.h19 { height: 19px; }
.h20 { height: 20px; }
.h21 { height: 21px; }
.h23 { height: 23px; }
.h26 { height: 26px; }
.h27 { height: 27px; }
.g {
  border-right: 1px solid #f1f5fc;
  border-bottom: 1px solid #f1f5fc;
}
.pre {
  border-right: 1px solid #d6e4f7;
}
.edge {
  border-right: 1px solid #d6e4f7;
}
.last .g {
  border-bottom: 1px solid #d6e4f7;
}
.stub {
  border-right: 1px solid #d6e4f7;
}
.heading {
  background: #dbe8f8;
  border: 1px solid #1467b8;
  outline: 1px solid #1467b855;
  outline-offset: -1px;
  text-align: center;
  font-size: 11px;
  font-weight: 700;
  line-height: 14px;
}
.name,
.value {
  font-size: 11px;
  line-height: 14px;
}
.name {
  padding-left: 7px;
  border-left: 1px solid #1467b8;
  font-weight: 700;
}
.value {
  border-right: 1px solid #1467b8;
  text-align: center;
  font-weight: 500;
}
.res:nth-child(8) td.name,
.res:nth-child(8) td.value {
  border-top: 1px solid #1467b8;
}
.res:nth-child(15) td.name,
.res:nth-child(15) td.value {
  border-bottom: 1px solid #1467b8;
}
.pale { background: #dbe8f8; font-weight: 700; }
.sky { background: #a5c8ed; font-weight: 700; }
.slate { background: #7b8d9d; font-weight: 700; }
.mist { background: #a9b6c0; font-weight: 700; }

.chart {
  position: absolute;
  left: 537px;
  top: 170px;
  stroke: none;
}
.chart text {
  fill: #fff;
  text-anchor: middle;
  font-family: Roboto, sans-serif;
}
.chart .lbl {
  font-size: 8px;
  font-weight: 400;
}
.chart .pct {
  font-size: 10px;
  font-weight: 700;
}
.chart .big-pct {
  font-size: 12px;
}

.tabs {
  display: flex;
  align-items: stretch;
  height: 17px;
  background: #303030;
  border-bottom: 1px solid #1c1c1c;
  font-family: "Liberation Sans", sans-serif;
  font-size: 8px;
}
.arrows {
  display: flex;
  justify-content: center;
  gap: 8px;
  width: 36px;
  padding-right: 3px;
  border-right: 1px solid #555;
}
.tab {
  min-width: 49px;
  padding: 0 10px;
  background: #1f1f1f;
  color: #9a9a9a;
  border-right: 1px solid #484848;
}
.tab.on {
  background: #fff;
  color: #16803f;
  font-weight: 700;
  margin-bottom: 2px;
}
.plus {
  width: 23px;
  border-right: 1px solid #555;
}

.status {
  display: flex;
  align-items: center;
  height: 13px;
  padding-left: 12px;
  background: #3d3d3d;
}
.acc {
  margin-left: 12px;
  gap: 3px;
}
.views {
  display: flex;
  align-self: stretch;
  margin-left: auto;
}
.views button {
  width: 22px;
}
.views .on {
  background: #555;
}
.zoombtn {
  margin-left: 4px;
}
.zoom {
  appearance: none;
  width: 62px;
  height: 9px;
  margin-left: 4px;
}
.zoom::-webkit-slider-runnable-track {
  height: 2px;
  background: #787878;
}
.zoom::-webkit-slider-thumb {
  appearance: none;
  width: 9px;
  height: 9px;
  margin-top: -4px;
  border-radius: 50%;
  background: #a8a8a8;
}
.status output {
  width: 43px;
  padding-left: 10px;
}
</style>
